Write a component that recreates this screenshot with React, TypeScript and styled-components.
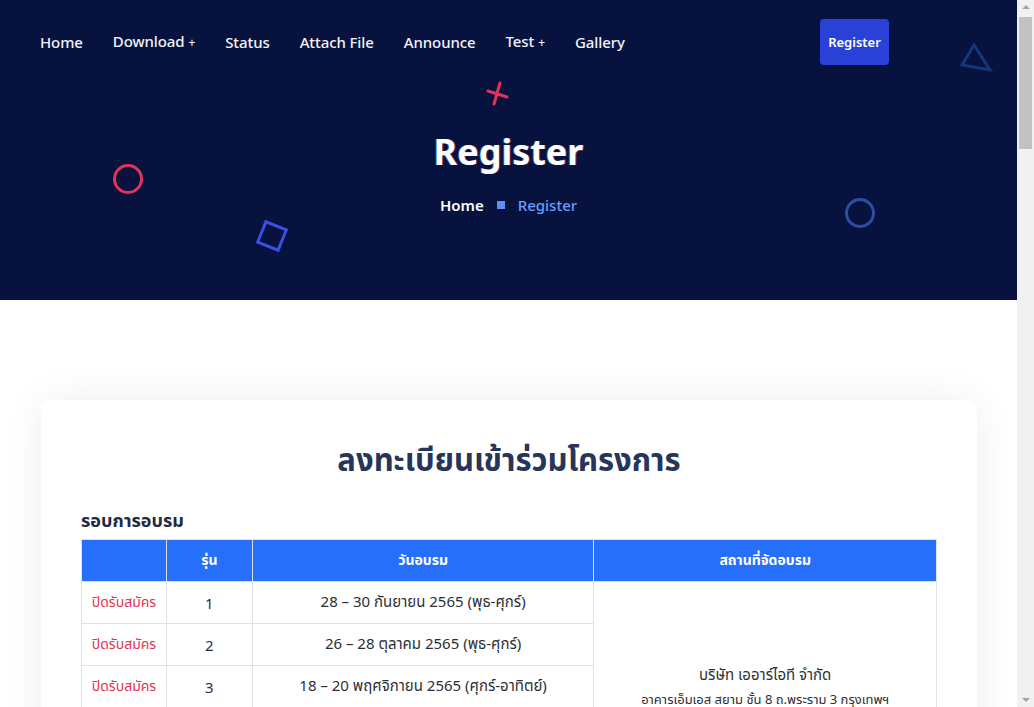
import styled, { createGlobalStyle } from 'styled-components';

const GlobalStyle = createGlobalStyle`
  html, body {
    margin: 0;
    padding: 0;
    background: #ffffff;
    font-family: 'Noto Sans', 'Noto Sans Thai', 'Open Sans', sans-serif;
  }
  * { box-sizing: border-box; }
`;

const Page = styled.div`
  width: calc(100% - 17px);
`;

/* window scrollbar as drawn in the screenshot */
const ScrollTrack = styled.div`
  position: fixed;
  top: 0;
  right: 0;
  width: 17px;
  height: 100vh;
  background: #f1f1f1;
  display: flex;
  flex-direction: column;
  align-items: center;
  justify-content: space-between;
  padding: 5px 0;
`;

const ScrollThumb = styled.div`
  position: absolute;
  top: 17px;
  left: 2px;
  width: 13px;
  height: 132px;
  background: #c1c1c1;
`;

const ScrollArrow = styled.div<{ $down?: boolean }>`
  width: 0;
  height: 0;
  border-left: 4px solid transparent;
  border-right: 4px solid transparent;
  ${(p) => (p.$down ? 'border-top: 4px solid #a3a3a3;' : 'border-bottom: 4px solid #a3a3a3;')}
`;

const Hero = styled.header`
  position: relative;
  height: 300px;
  background: #08123f;
  overflow: hidden;
`;

const Nav = styled.nav`
  display: flex;
  align-items: center;
  padding: 19px 0 0 40px;
  height: 65px;
`;

const Menu = styled.ul`
  display: flex;
  align-items: center;
  gap: 30px;
  list-style: none;
  margin: 0;
  padding: 0;
  flex: 1;
`;

const MenuItem = styled.li`
  color: #f2f3f8;
  font-size: 15px;
  font-weight: 500;
  line-height: 46px;
  white-space: nowrap;
  letter-spacing: -0.1px;
`;

const Plus = styled.span`
  font-size: 12px;
  margin-left: 4px;
`;

const RegisterButton = styled.button`
  margin-right: 128px;
  height: 46px;
  padding: 0;
  width: 69px;
  border: none;
  border-radius: 4px;
  background: #2a41d8;
  color: #ffffff;
  font-family: inherit;
  font-size: 13px;
  font-weight: 600;
`;

const HeroBody = styled.div`
  display: flex;
  flex-direction: column;
  align-items: center;
  padding-top: 62px;
`;

const HeroTitle = styled.h1`
  margin: 0;
  color: #ffffff;
  font-size: 36px;
  font-weight: 700;
  line-height: 50px;
  text-shadow: 1px 0 0 rgba(255, 60, 100, 0.4), -1px 0 0 rgba(60, 200, 255, 0.4);
`;

const Crumbs = styled.div`
  display: flex;
  align-items: center;
  gap: 13px;
  margin-top: 18px;
  font-size: 15px;
`;

const Crumb = styled.span<{ $active?: boolean }>`
  color: ${(p) => (p.$active ? '#6b9cff' : '#ffffff')};
  font-weight: ${(p) => (p.$active ? 500 : 600)};
`;

const CrumbDot = styled.span`
  width: 8px;
  height: 8px;
  background: #5f8ef4;
`;

const Shape = styled.svg`
  position: absolute;
`;

const Main = styled.main`
  padding: 100px 40px 60px 41px;
`;

const Card = styled.section`
  background: #ffffff;
  border-radius: 10px;
  box-shadow: 0 0 40px rgba(20, 30, 60, 0.07);
  padding: 36px 40px 60px;
`;

const CardTitle = styled.h2`
  margin: 0 0 25px;
  text-align: center;
  color: #27355a;
  font-size: 31px;
  font-weight: 700;
  line-height: 46px;
`;

const SectionLabel = styled.h3`
  margin: 0 0 6px;
  color: #1f2a44;
  font-size: 18px;
  font-weight: 700;
  line-height: 26px;
`;

const Table = styled.table`
  width: 856px;
  border-collapse: collapse;
  color: #2c2f36;
`;

const Th = styled.th`
  height: 42px;
  background: #266ffb;
  color: #ffffff;
  font-weight: 700;
  font-size: 14px;
  border: 1px solid #dde1ea;
  text-align: center;
`;

const Td = styled.td<{ $closed?: boolean }>`
  height: 42px;
  border: 1px solid #dde1ea;
  text-align: center;
  color: ${(p) => (p.$closed ? '#e0344f' : '#2c2f36')};
  font-size: ${(p) => (p.$closed ? '14px' : '15px')};
`;

const PlaceCell = styled.td`
  border: 1px solid #dde1ea;
  text-align: center;
  vertical-align: top;
  padding-top: 80px;
`;

const PlaceName = styled.div`
  font-size: 15px;
  color: #2c2f36;
  line-height: 24px;
`;

const PlaceAddress = styled.div`
  font-size: 13px;
  color: #2c2f36;
  line-height: 26px;
`;

const rounds = [
  { no: 1, date: '28 – 30 กันยายน 2565 (พุธ-ศุกร์)' },
  { no: 2, date: '26 – 28 ตุลาคม 2565 (พุธ-ศุกร์)' },
  { no: 3, date: '18 – 20 พฤศจิกายน 2565 (ศุกร์-อาทิตย์)' },
  { no: 4, date: '14 – 16 ธันวาคม 2565 (พุธ-ศุกร์)' },
];

const menu = ['Home', 'Download', 'Status', 'Attach File', 'Announce', 'Test', 'Gallery'];
const withPlus = ['Download', 'Test'];

export default function App() {
  return (
    <>
      <GlobalStyle />
      <Page>
        <Hero>
          <Nav>
            <Menu>
              {menu.map((m) => (
                <MenuItem key={m}>
                  {m}
                  {withPlus.includes(m) && <Plus>+</Plus>}
                </MenuItem>
              ))}
            </Menu>
            <RegisterButton>Register</RegisterButton>
          </Nav>
          <HeroBody>
            <HeroTitle>Register</HeroTitle>
            <Crumbs>
              <Crumb>Home</Crumb>
              <CrumbDot />
              <Crumb $active>Register</Crumb>
            </Crumbs>
          </HeroBody>

          <Shape style={{ left: 484, top: 80 }} width="26" height="26" viewBox="0 0 26 26">
            <path d="M4 11 L23 17 M16 3 L10 24" stroke="#e2335a" strokeWidth="3" strokeLinecap="round" />
          </Shape>
          <Shape style={{ left: 112, top: 163 }} width="32" height="32" viewBox="0 0 32 32">
            <circle cx="16" cy="16" r="13.5" fill="none" stroke="#e2335a" strokeWidth="3" />
          </Shape>
          <Shape style={{ left: 252, top: 216 }} width="40" height="40" viewBox="0 0 40 40">
            <rect x="9" y="9" width="22" height="22" transform="rotate(22 20 20)" fill="none" stroke="#3b4fe0" strokeWidth="3" />
          </Shape>
          <Shape style={{ left: 844, top: 197 }} width="32" height="32" viewBox="0 0 32 32">
            <circle cx="16" cy="16" r="13.5" fill="none" stroke="#2d4fa3" strokeWidth="3" />
          </Shape>
          <Shape style={{ left: 957, top: 40 }} width="38" height="34" viewBox="0 0 38 34">
            <path d="M17 5 L33 30 L5 25 Z" fill="none" stroke="#133778" strokeWidth="3" strokeLinejoin="miter" />
          </Shape>
        </Hero>

        <Main>
          <Card>
            <CardTitle>ลงทะเบียนเข้าร่วมโครงการ</CardTitle>
            <SectionLabel>รอบการอบรม</SectionLabel>
            <Table>
              <colgroup>
                <col style={{ width: 85 }} />
                <col style={{ width: 86 }} />
                <col style={{ width: 342 }} />
                <col style={{ width: 343 }} />
              </colgroup>
              <thead>
                <tr>
                  <Th />
                  <Th>รุ่น</Th>
                  <Th>วันอบรม</Th>
                  <Th>สถานที่จัดอบรม</Th>
                </tr>
              </thead>
              <tbody>
                {rounds.map((r, i) => (
                  <tr key={r.no}>
                    <Td $closed>ปิดรับสมัคร</Td>
                    <Td>{r.no}</Td>
                    <Td>{r.date}</Td>
                    {i === 0 && (
                      <PlaceCell rowSpan={rounds.length}>
                        <PlaceName>บริษัท เออาร์ไอที จำกัด</PlaceName>
                        <PlaceAddress>อาคารเอ็มเอส สยาม ชั้น 8 ถ.พระราม 3 กรุงเทพฯ</PlaceAddress>
                      </PlaceCell>
                    )}
                  </tr>
                ))}
              </tbody>
            </Table>
          </Card>
        </Main>
      </Page>
      <ScrollTrack>
        <ScrollArrow />
        <ScrollThumb />
        <ScrollArrow $down />
      </ScrollTrack>
    </>
  );
}
